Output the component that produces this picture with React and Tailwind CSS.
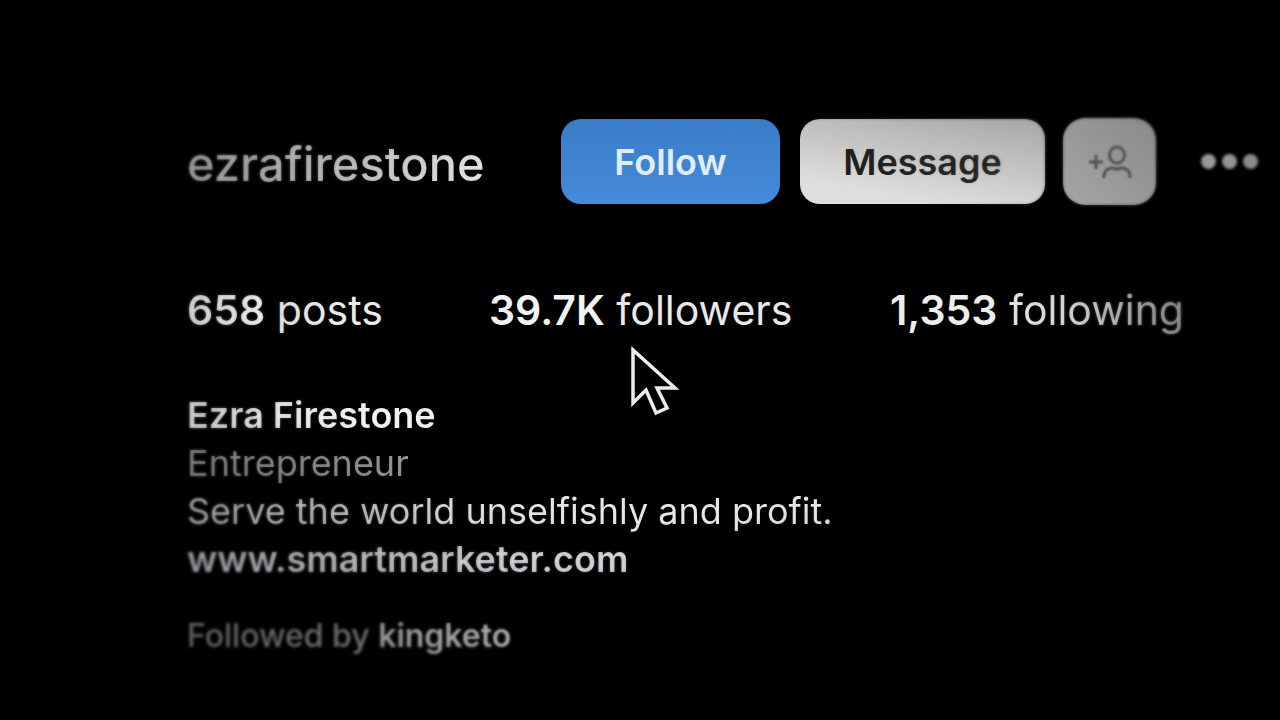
import { Fragment } from 'react'

const stats = [
  { value: '658', label: 'posts', labelClass: 'text-[#e9e9e9]', valueClass: 'bg-linear-to-r from-[#d6d6d6] to-[#f0f0f0] bg-clip-text text-transparent' },
  { value: '39.7K', label: 'followers', labelClass: 'text-[#e8e8e8]', valueClass: 'text-[#f2f2f2]' },
  { value: '1,353', label: 'following', labelClass: 'bg-linear-to-r from-[#e6e6e6] from-30% to-[#989898] bg-clip-text text-transparent', valueClass: 'text-[#ededed]' },
]

const AddPersonIcon = () => (
  <svg width="44" height="34" viewBox="0 0 44 34" fill="none" stroke="#525252" strokeWidth="3" aria-hidden="true">
    <path d="M1 17h14M8 10v14" />
    <ellipse cx="29" cy="10" rx="7.5" ry="8" />
    <path d="M16 33v-2c0-5 4-8 8-8 2 0 3 1 5 1s3-1 5-1c4 0 8 3 8 8v2" />
  </svg>
)

const Pointer = () => (
  <svg className="pointer-events-none absolute top-[345px] left-[629px]" width="52" height="74" viewBox="0 0 52 74" aria-hidden="true">
    <path d="M4 5v53l13-13 10 23 11-5-10-20h18Z" fill="#000" stroke="#ececec" strokeWidth="3.5" />
  </svg>
)

const ProfileHeader = () => (
  <header className="flex items-center">
    <h1 className="w-[374px] shrink-0 pt-1">
      <span className="bg-linear-to-r from-[#9a9a9a] to-[#e2e2e2] bg-clip-text text-[47px] leading-[56px] font-medium text-transparent">
        ezrafirestone
      </span>
    </h1>
    <button className="h-[85px] w-[219px] shrink-0 rounded-[20px] bg-linear-to-b from-[#3a7cc6] to-[#458bdb] text-[36px] font-semibold text-[#e2edf9]">
      Follow
    </button>
    <button className="ml-5 h-[85px] w-[245px] shrink-0 rounded-[20px] bg-[linear-gradient(10deg,#dedede_20%,#a6a6a6)] text-[36px] font-semibold text-[#202020]">
      Message
    </button>
    <button
      aria-label="Similar accounts"
      className="ml-[18px] flex h-[87px] w-[93px] shrink-0 items-center justify-center rounded-[22px] bg-linear-to-tr from-[#a6a6a6] to-[#8a8a8a]"
    >
      <AddPersonIcon />
    </button>
    <button aria-label="Options" className="ml-[45px] flex shrink-0 gap-[6px]">
      <span className="size-[15px] rounded-full bg-[#999999]" />
      <span className="size-[15px] rounded-full bg-[#949494]" />
      <span className="size-[15px] rounded-full bg-[#8c8c8c]" />
    </button>
  </header>
)

const ProfileStats = () => (
  <ul className="mt-[77px] grid grid-cols-[302px_401px_auto] text-[41px] leading-[56px] whitespace-nowrap">
    {stats.map(stat => (
      <li key={stat.label}>
        <strong className={`font-semibold ${stat.valueClass}`}>{stat.value}</strong>{' '}
        <span className={stat.labelClass}>{stat.label}</span>
      </li>
    ))}
  </ul>
)

const ProfileBio = () => (
  <Fragment>
    <div className="mt-[53px] flex flex-col items-start text-[36px] leading-[48px]">
      <h2 className="bg-linear-to-r from-[#d0d0d0] to-[#f2f2f2] to-50% bg-clip-text font-semibold text-transparent">
        Ezra Firestone
      </h2>
      <p className="bg-linear-to-r from-[#858585] to-[#9a9a9a] bg-clip-text text-transparent">Entrepreneur</p>
      <p className="bg-linear-to-r from-[#a6a6a6] to-[#e6e6e6] to-45% bg-clip-text text-transparent">
        Serve the world unselfishly and profit.
      </p>
      <a
        href="#website"
        className="bg-linear-to-r from-[#969ba0] to-[#d8dadf] to-80% bg-clip-text font-semibold text-transparent"
      >
        www.smartmarketer.com
      </a>
    </div>
    <p className="mt-[29px] text-[32px] leading-[48px] font-medium">
      <span className="bg-linear-to-r from-[#606060] to-[#727272] bg-clip-text text-transparent">Followed by</span>{' '}
      <a href="#kingketo" className="bg-linear-to-r from-[#9a9a9a] to-[#b0b0b0] bg-clip-text font-semibold text-transparent">
        kingketo
      </a>
    </p>
  </Fragment>
)

const App = () => {
  return (
    <main className="relative min-h-screen overflow-hidden bg-black pt-[118px] pl-[187px] font-['Inter',sans-serif]">
      <ProfileHeader />
      <ProfileStats />
      <ProfileBio />
      <Pointer />
      {/* soft focus towards the edges */}
      <div className="pointer-events-none absolute inset-0 backdrop-blur-[1.5px] [mask-image:radial-gradient(ellipse_at_52%_45%,transparent_35%,black_65%)]" />
    </main>
  )
}

export default App
